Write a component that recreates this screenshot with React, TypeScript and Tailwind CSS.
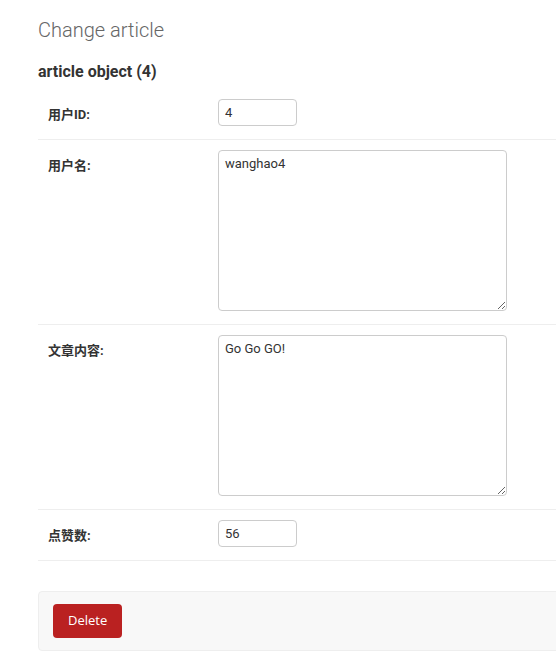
const labelFont = { fontFamily: "Roboto, 'Noto Sans CJK SC', sans-serif" };

function Row({ label, children }: { label: string; children: React.ReactNode }) {
  return (
    <div className="flex border-b border-[#eee] pl-[10px] pt-[10px] pb-[13px]">
      <label
        className="w-[170px] shrink-0 pr-[10px] pt-[6px] text-[13px] leading-[20px] font-bold text-[#333]"
        style={labelFont}
      >
        {label}
      </label>
      <div className="flex">{children}</div>
    </div>
  );
}

function SmallInput({ value }: { value: string }) {
  return (
    <input
      readOnly
      value={value}
      className="w-[79px] h-[27px] border border-[#ccc] rounded-[4px] px-[6px] text-[13px] text-[#333] outline-none font-['Roboto',sans-serif]"
    />
  );
}

function Area({ value }: { value: string }) {
  return (
    <textarea
      readOnly
      value={value}
      className="block w-[289px] h-[161px] border border-[#ccc] rounded-[4px] px-[6px] py-[5px] text-[13px] leading-[16px] text-[#333] outline-none font-['Roboto',sans-serif]"
    />
  );
}

export default function App() {
  return (
    <div className="w-[556px] h-[667px] overflow-hidden bg-white font-['Roboto',sans-serif]">
      <div className="w-[640px] pl-[38px] pt-[18px]">
        <h1 className="text-[20px] leading-[24px] font-light text-[#666]">Change article</h1>
        <h2 className="mt-[21px] text-[16px] leading-[18px] font-bold text-[#333]">
          article object (4)
        </h2>
        <div className="mt-[8px]">
          <Row label="用户ID:">
            <SmallInput value="4" />
          </Row>
          <Row label="用户名:">
            <Area value="wanghao4" />
          </Row>
          <Row label="文章内容:">
            <Area value="Go Go GO!" />
          </Row>
          <Row label="点赞数:">
            <SmallInput value="56" />
          </Row>
        </div>
        <div className="mt-[30px] bg-[#f8f8f8] border border-[#eee] rounded-[4px] px-[14px] py-[12px]">
          <button className="h-[34px] px-[15px] rounded-[4px] bg-[#ba2121] text-white text-[13px] font-['Open_Sans',sans-serif]">
            Delete
          </button>
        </div>
      </div>
    </div>
  );
}
